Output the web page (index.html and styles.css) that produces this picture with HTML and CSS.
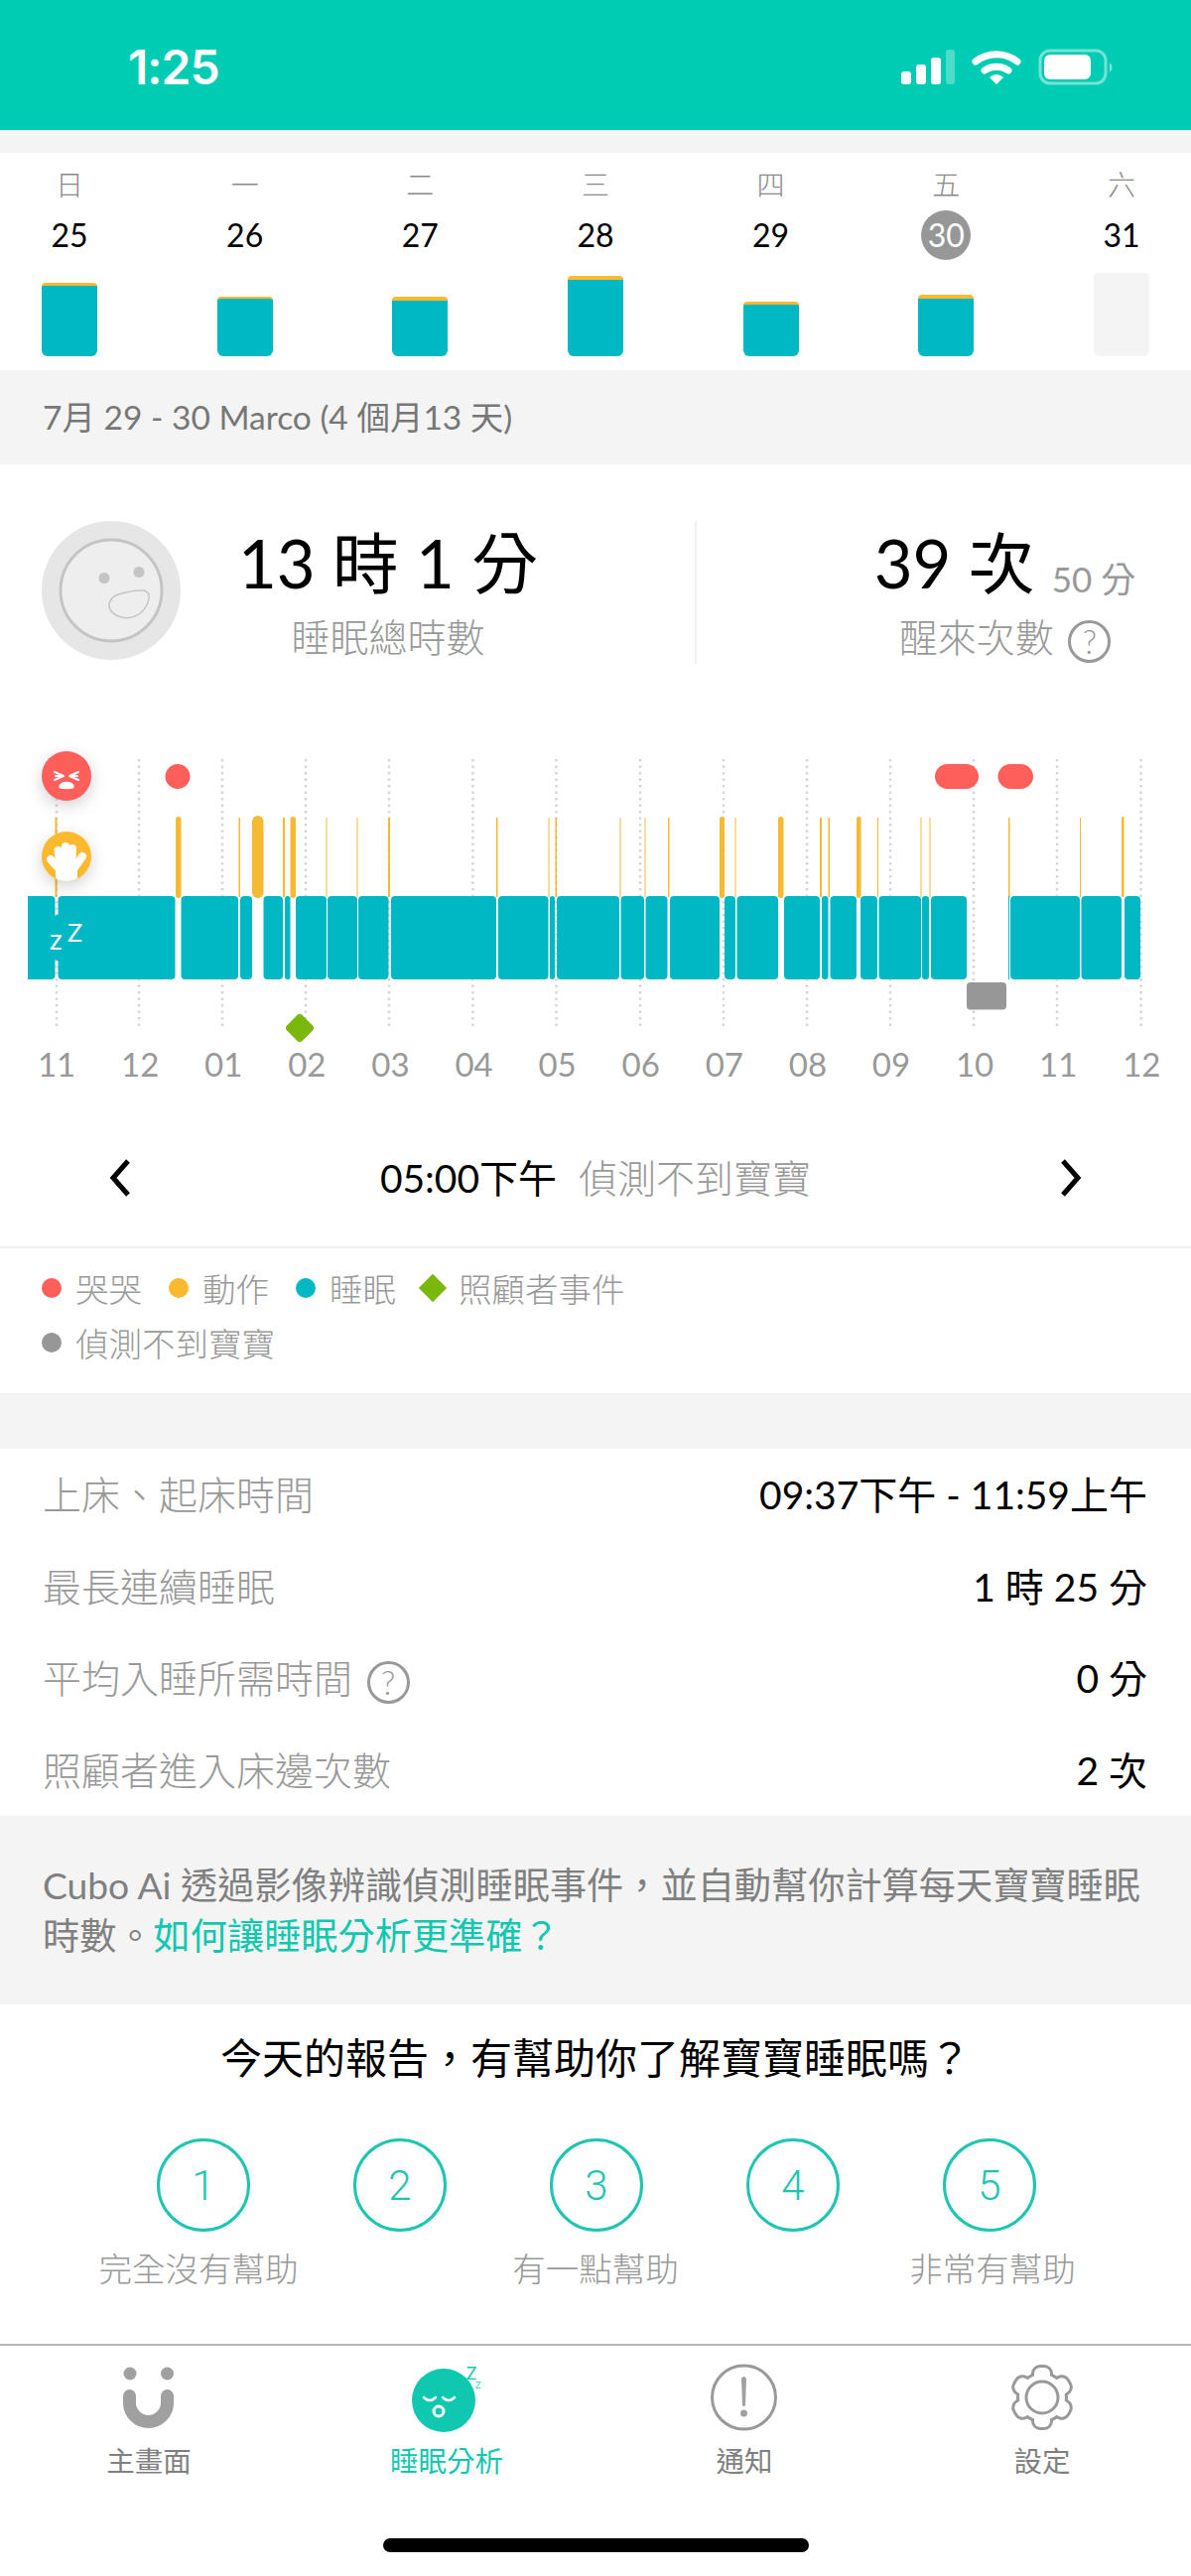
FILE: index.html
```html
<!DOCTYPE html>
<html lang="zh-Hant">
<head>
    <meta charset="UTF-8">
    <meta name="viewport" content="width=device-width, initial-scale=1.0">
    <title>睡眠分析</title>
    <link rel="stylesheet" href="styles.css">
</head>
<body>
    <div class="status-bar">
        <span class="clock">1:25</span>
        <svg class="status-icons" width="216" height="37" viewBox="0 0 216 37">
            <rect x="1" y="23" width="10" height="13" rx="3" fill="#fff"/>
            <rect x="16" y="16" width="10" height="20" rx="3" fill="#fff"/>
            <rect x="31" y="9" width="10" height="27" rx="3" fill="#fff"/>
            <rect x="46" y="1" width="9" height="35" rx="3" fill="#fff" opacity=".3"/>
            <path d="M76 13 A34 34 0 0 1 118 13" fill="none" stroke="#fff" stroke-width="7" stroke-linecap="round"/>
            <path d="M85 22 A21 21 0 0 1 109 22" fill="none" stroke="#fff" stroke-width="7" stroke-linecap="round"/>
            <path d="M90 29 Q97 23 104 29 L97 36 Z" fill="#fff"/>
            <rect x="141" y="2" width="66" height="33" rx="10" fill="none" stroke="#fff" stroke-width="3" opacity=".45"/>
            <rect x="145" y="6" width="47" height="25" rx="6" fill="#fff"/>
            <path d="M211 14 Q216 19 211 24 Z" fill="#fff" opacity=".5"/>
        </svg>
    </div>
    <div class="top-gap"></div>

    <div class="week">
        <div class="day">
            <span class="weekday">日</span>
            <span class="date">25</span>
            <div class="bar-slot"><div class="bar" style="height: 74px; border-top-width: 3px;"></div></div>
        </div>
        <div class="day">
            <span class="weekday">一</span>
            <span class="date">26</span>
            <div class="bar-slot"><div class="bar" style="height: 60px; border-top-width: 2px;"></div></div>
        </div>
        <div class="day">
            <span class="weekday">二</span>
            <span class="date">27</span>
            <div class="bar-slot"><div class="bar" style="height: 60px; border-top-width: 4px;"></div></div>
        </div>
        <div class="day">
            <span class="weekday">三</span>
            <span class="date">28</span>
            <div class="bar-slot"><div class="bar" style="height: 81px; border-top-width: 4px;"></div></div>
        </div>
        <div class="day">
            <span class="weekday">四</span>
            <span class="date">29</span>
            <div class="bar-slot"><div class="bar" style="height: 55px; border-top-width: 3px;"></div></div>
        </div>
        <div class="day">
            <span class="weekday">五</span>
            <span class="date active">30</span>
            <div class="bar-slot"><div class="bar" style="height: 62px; border-top-width: 4px;"></div></div>
        </div>
        <div class="day">
            <span class="weekday">六</span>
            <span class="date">31</span>
            <div class="bar-slot"><div class="bar empty"></div></div>
        </div>
    </div>

    <div class="range">7月 29 - 30 Marco (4 個月13 天)</div>

    <div class="summary">
        <svg class="avatar" width="140" height="140" viewBox="0 0 140 140">
            <circle cx="70" cy="70" r="70" fill="#e6e6e6"/>
            <circle cx="70" cy="70" r="51" fill="#eeeeee" stroke="#c4c4c4" stroke-width="3"/>
            <circle cx="63" cy="57.500" r="5.500" fill="#c4c4c4"/>
            <circle cx="98" cy="51.500" r="5.500" fill="#c4c4c4"/>
            <path d="M68 84 C69 78 72 76 76 74.500 C84 72 94 70 100 70 C106 69.500 109 73 108 78 C106 90 96 98 85 97.700 C76 97.500 67 91 68 84Z" fill="#eeeeee" stroke="#c4c4c4" stroke-width="1.500"/>
        </svg>
        <div class="sum-main">
            <div class="sum-value">13 時 1 分</div>
            <div class="sum-label">睡眠總時數</div>
        </div>
        <div class="sum-side">
            <div class="sum-value">39 次 <small>50 分</small></div>
            <div class="sum-label">醒來次數 <span class="help big">?</span></div>
        </div>
    </div>

    <div class="chart">
        <svg class="chart-canvas" width="1200" height="315" viewBox="0 740 1200 315">
            <defs>
                <clipPath id="hand-clip"><circle cx="25" cy="25" r="25"/></clipPath>
            </defs>
            <g class="guides">
                <line x1="57" x2="57" y1="765" y2="1037"/>
                <line x1="140" x2="140" y1="765" y2="1037"/>
                <line x1="224" x2="224" y1="765" y2="1037"/>
                <line x1="308" x2="308" y1="765" y2="1037"/>
                <line x1="392" x2="392" y1="765" y2="1037"/>
                <line x1="476.500" x2="476.500" y1="765" y2="1037"/>
                <line x1="560.500" x2="560.500" y1="765" y2="1037"/>
                <line x1="645" x2="645" y1="765" y2="1037"/>
                <line x1="729" x2="729" y1="765" y2="1037"/>
                <line x1="813" x2="813" y1="765" y2="1037"/>
                <line x1="897" x2="897" y1="765" y2="1037"/>
                <line x1="981" x2="981" y1="765" y2="1037"/>
                <line x1="1065" x2="1065" y1="765" y2="1037"/>
                <line x1="1149.500" x2="1149.500" y1="765" y2="1037"/>
            </g>

            <!-- crying -->
            <g class="cry">
                <rect x="166.500" y="770" width="25" height="25" rx="12.500"/>
                <rect x="942" y="770" width="44" height="25" rx="12.500"/>
                <rect x="1005.500" y="770" width="35.500" height="25" rx="12.500"/>
            </g>

            <!-- movement -->
            <g class="move">
                <rect x="55.500" y="824" width="2" height="80"/>
                <rect x="177" y="823" width="5.500" height="82" rx="2.700"/>
                <rect x="240.500" y="824" width="1.500" height="80"/>
                <rect x="254" y="822" width="11.500" height="83" rx="5.700"/>
                <rect x="285" y="824" width="2" height="80"/>
                <rect x="292.500" y="823" width="5.500" height="82" rx="2.700"/>
                <rect x="328.500" y="824" width="1" height="80"/>
                <rect x="359.500" y="824" width="1" height="80"/>
                <rect x="391" y="824" width="2" height="80"/>
                <rect x="500" y="824" width="1.500" height="80"/>
                <rect x="552.500" y="824" width="1" height="80"/>
                <rect x="559.500" y="824" width="1.500" height="80"/>
                <rect x="624.500" y="824" width="1" height="80"/>
                <rect x="649.500" y="824" width="1" height="80"/>
                <rect x="673" y="824" width="1.500" height="80"/>
                <rect x="725" y="823" width="5" height="82" rx="2.500"/>
                <rect x="740.500" y="824" width="1" height="80"/>
                <rect x="784" y="823" width="5.500" height="82" rx="2.700"/>
                <rect x="826" y="824" width="2" height="80"/>
                <rect x="834.500" y="824" width="1.500" height="80"/>
                <rect x="863" y="823" width="4.500" height="82" rx="2.200"/>
                <rect x="884" y="824" width="1" height="80"/>
                <rect x="927.500" y="824" width="1" height="80"/>
                <rect x="936.500" y="824" width="1" height="80"/>
                <rect x="1016" y="824" width="1.500" height="80"/>
                <rect x="1088" y="824" width="1" height="80"/>
                <rect x="1130" y="823" width="2.500" height="81" rx="1.200"/>
            </g>

            <!-- sleep -->
            <g class="sleep">
                <rect x="28" y="903" width="10" height="84"/>
                <rect x="28" y="903" width="27.500" height="84" rx="4"/>
                <rect x="58.500" y="903" width="118" height="84" rx="4"/>
                <rect x="182.500" y="903" width="57.500" height="84" rx="4"/>
                <rect x="242" y="903" width="12" height="84" rx="4"/>
                <rect x="265.500" y="903" width="19.500" height="84" rx="4"/>
                <rect x="287" y="903" width="5.500" height="84" rx="2.500"/>
                <rect x="298" y="903" width="31" height="84" rx="4"/>
                <rect x="330" y="903" width="30" height="84" rx="4"/>
                <rect x="361" y="903" width="30.500" height="84" rx="4"/>
                <rect x="394" y="903" width="106" height="84" rx="4"/>
                <rect x="502" y="903" width="50.500" height="84" rx="4"/>
                <rect x="554" y="903" width="5" height="84" rx="2.500"/>
                <rect x="561" y="903" width="63" height="84" rx="4"/>
                <rect x="625.500" y="903" width="23.500" height="84" rx="4"/>
                <rect x="650.500" y="903" width="22" height="84" rx="4"/>
                <rect x="675" y="903" width="50" height="84" rx="4"/>
                <rect x="730" y="903" width="11" height="84" rx="4"/>
                <rect x="742.500" y="903" width="41.500" height="84" rx="4"/>
                <rect x="790" y="903" width="36" height="84" rx="4"/>
                <rect x="828" y="903" width="6.500" height="84" rx="3"/>
                <rect x="836.500" y="903" width="26.500" height="84" rx="4"/>
                <rect x="867" y="903" width="17" height="84" rx="4"/>
                <rect x="885.500" y="903" width="42.500" height="84" rx="4"/>
                <rect x="929" y="903" width="7" height="84" rx="3"/>
                <rect x="938" y="903" width="36" height="84" rx="4"/>
                <rect x="1016" y="903" width="1" height="84"/>
                <rect x="1018" y="903" width="70" height="84" rx="4"/>
                <rect x="1089.500" y="903" width="40.500" height="84" rx="4"/>
                <rect x="1133" y="903" width="16" height="84" rx="4"/>
            </g>

            <rect class="lost" x="974" y="990" width="40" height="27.500" rx="4"/>
            <rect class="carer" x="291" y="1025" width="22" height="22" rx="4" transform="rotate(45 302 1036)"/>

            <!-- row markers -->
            <g class="marker">
                <circle cx="67" cy="782" r="25" fill="#ff5f5b"/>
                <path d="M55 778 L64 782 L55 786 M56 782 H64 M79 778 L70 782 L79 786 M78 782 H70" fill="none" stroke="#fff" stroke-width="2" stroke-linecap="round" stroke-linejoin="round"/>
                <path d="M60 793 C60 787 74 787 74 793 C74 795 60 795 60 793Z" fill="#fff" stroke="#fff" stroke-width="1.500"/>
            </g>
            <g class="marker">
                <circle cx="67" cy="863" r="25" fill="#fdb92e"/>
                <g transform="translate(42 838)" clip-path="url(#hand-clip)">
                    <rect x="14" y="30" width="22" height="22" rx="6" fill="#fff"/>
                    <g stroke="#fff" stroke-width="8" stroke-linecap="round">
                        <line x1="9" y1="28" x2="18" y2="38"/>
                        <line x1="16.500" y1="19" x2="19" y2="35"/>
                        <line x1="24" y1="15" x2="24" y2="35"/>
                        <line x1="31" y1="17" x2="30" y2="35"/>
                        <line x1="41" y1="25" x2="32" y2="38"/>
                    </g>
                </g>
            </g>
            <circle class="sleep-badge" cx="67" cy="945" r="25"/>
            <text class="zz" x="50" y="957">z</text>
            <text class="zz big" x="68" y="949">Z</text>
        </svg>
        <div class="hours">
            <span>11</span><span>12</span><span>01</span><span>02</span><span>03</span><span>04</span><span>05</span><span>06</span><span>07</span><span>08</span><span>09</span><span>10</span><span>11</span><span>12</span>
        </div>
    </div>

    <div class="time-nav">
        <svg width="26" height="40" viewBox="0 0 26 40"><path d="M21 3 L6 20 L21 37" class="chevron"/></svg>
        <div class="time-text"><span class="time-now">05:00下午</span><span class="time-state">偵測不到寶寶</span></div>
        <svg width="26" height="40" viewBox="0 0 26 40"><path d="M5 3 L20 20 L5 37" class="chevron"/></svg>
    </div>

    <div class="legend">
        <div class="legend-row">
            <span class="legend-item"><i class="dot red"></i>哭哭</span>
            <span class="legend-item"><i class="dot yellow"></i>動作</span>
            <span class="legend-item"><i class="dot teal"></i>睡眠</span>
            <span class="legend-item"><i class="diamond"></i>照顧者事件</span>
        </div>
        <div class="legend-row">
            <span class="legend-item"><i class="dot grey"></i>偵測不到寶寶</span>
        </div>
    </div>

    <div class="gap"></div>

    <div class="stats">
        <div class="stat-row"><span class="stat-label">上床、起床時間</span><span class="stat-value">09:37下午 - 11:59上午</span></div>
        <div class="stat-row"><span class="stat-label">最長連續睡眠</span><span class="stat-value">1 時 25 分</span></div>
        <div class="stat-row"><span class="stat-label">平均入睡所需時間 <span class="help">?</span></span><span class="stat-value">0 分</span></div>
        <div class="stat-row"><span class="stat-label">照顧者進入床邊次數</span><span class="stat-value">2 次</span></div>
    </div>

    <div class="note">Cubo Ai 透過影像辨識偵測睡眠事件，並自動幫你計算每天寶寶睡眠時數。<a class="note-link">如何讓睡眠分析更準確？</a></div>

    <div class="rating">
        <h2 class="rating-title">今天的報告，有幫助你了解寶寶睡眠嗎？</h2>
        <div class="scale">
            <span class="score">1</span>
            <span class="score">2</span>
            <span class="score">3</span>
            <span class="score">4</span>
            <span class="score">5</span>
        </div>
        <div class="scale-labels">
            <span>完全沒有幫助</span>
            <span>有一點幫助</span>
            <span>非常有幫助</span>
        </div>
    </div>

    <div class="tabs">
        <div class="tab">
            <svg width="100" height="74" viewBox="0 0 100 74">
                <circle cx="31" cy="12" r="6.500" fill="#a0a0a0"/>
                <circle cx="68.500" cy="12" r="6.500" fill="#a0a0a0"/>
                <path d="M30.500 34.500 V41.500 A19 19 0 0 0 68.500 41.500 V34.500" fill="none" stroke="#a0a0a0" stroke-width="13" stroke-linecap="round"/>
            </svg>
            <span>主畫面</span>
        </div>
        <div class="tab active">
            <svg width="100" height="74" viewBox="0 0 100 74">
                <circle cx="47" cy="39" r="32" fill="#10c8b0"/>
                <path d="M27 36 Q33 42 39 36 M46 36 Q52 42 58 36" fill="none" stroke="#fff" stroke-width="2.500" stroke-linecap="round"/>
                <circle cx="42" cy="50" r="5" fill="none" stroke="#fff" stroke-width="3"/>
                <text class="tab-z" x="70" y="18">Z</text>
                <text class="tab-z small" x="79" y="27">z</text>
            </svg>
            <span>睡眠分析</span>
        </div>
        <div class="tab">
            <svg width="100" height="74" viewBox="0 0 100 74">
                <circle cx="49.500" cy="36" r="32" fill="none" stroke="#999" stroke-width="3"/>
                <path d="M47 17 Q49.500 13 52 17 L51 44 Q49.500 46 48 44 Z" fill="#a0a0a0"/>
                <circle cx="49.500" cy="52" r="3.500" fill="#a0a0a0"/>
            </svg>
            <span>通知</span>
        </div>
        <div class="tab">
            <svg width="100" height="74" viewBox="0 0 100 74">
                <defs>
                    <g id="gear-shape">
                        <circle cx="50" cy="36" r="23"/>
                        <rect x="42" y="6" width="16" height="24" rx="6"/>
                        <rect x="42" y="6" width="16" height="24" rx="6" transform="rotate(60 50 36)"/>
                        <rect x="42" y="6" width="16" height="24" rx="6" transform="rotate(120 50 36)"/>
                        <rect x="42" y="6" width="16" height="24" rx="6" transform="rotate(180 50 36)"/>
                        <rect x="42" y="6" width="16" height="24" rx="6" transform="rotate(240 50 36)"/>
                        <rect x="42" y="6" width="16" height="24" rx="6" transform="rotate(300 50 36)"/>
                    </g>
                </defs>
                <use href="#gear-shape" fill="#999" stroke="#999" stroke-width="6"/>
                <use href="#gear-shape" fill="#fff"/>
                <circle cx="50" cy="36" r="16" fill="#fff" stroke="#999" stroke-width="3"/>
            </svg>
            <span>設定</span>
        </div>
    </div>
    <div class="home-bar"></div>
</body>
</html>
```

FILE: styles.css
```css
* {
    box-sizing: border-box;
}
body {
    margin: 0;
    width: 1200px;
    background-color: #ffffff;
    color: #000000;
    font-family: Lato, "Noto Sans CJK TC", sans-serif;
    overflow-x: hidden;
}

/* status bar */
.status-bar {
    height: 131px;
    background-color: #00ccb4;
    display: flex;
    justify-content: space-between;
    align-items: flex-start;
    padding: 40px 77px 0 129px;
}
.clock {
    color: #ffffff;
    font-family: Inter, sans-serif;
    font-weight: 600;
    font-size: 48px;
    line-height: 56px;
    letter-spacing: -1px;
}
.status-icons {
    margin-top: 9px;
}
.top-gap {
    height: 23px;
    background-color: #f4f4f4;
}

/* week strip */
.week {
    height: 219px;
    display: flex;
    justify-content: space-between;
    padding: 0 42px;
}
.day {
    width: 56px;
    display: flex;
    flex-direction: column;
    align-items: center;
}
.weekday {
    margin-top: 14px;
    height: 36px;
    line-height: 36px;
    font-size: 28px;
    font-weight: 300;
    color: #8a8a8a;
    white-space: nowrap;
}
.date {
    margin-top: 8px;
    width: 50px;
    height: 50px;
    line-height: 50px;
    border-radius: 50%;
    text-align: center;
    font-size: 32px;
    flex-shrink: 0;
}
.date.active {
    background-color: #979797;
    color: #ffffff;
}
.bar-slot {
    width: 56px;
    height: 97px;
    display: flex;
    align-items: flex-end;
}
.bar {
    width: 56px;
    background-color: #00b8c4;
    border-top: 3px solid #fdb92e;
    border-radius: 4px 4px 6px 6px;
}
.bar.empty {
    height: 84px;
    background-color: #f4f4f4;
    border-top: none;
}

.range {
    height: 95px;
    line-height: 95px;
    padding-left: 43px;
    background-color: #f4f4f4;
    color: #777777;
    font-size: 33.5px;
}

/* totals */
.summary {
    height: 272px;
    display: flex;
    align-items: flex-start;
    padding: 57px 0 0 42px;
}
.avatar {
    flex-shrink: 0;
}
.sum-main {
    width: 418px;
    text-align: center;
}
.sum-side {
    width: 500px;
    height: 144px;
    margin-left: 100px;
    padding-left: 123px;
    text-align: center;
    border-left: 2px solid #f0f0f0;
}
.sum-value {
    height: 84px;
    line-height: 84px;
    font-size: 67px;
    white-space: nowrap;
}
.sum-value small {
    font-size: 35px;
    color: #999999;
    vertical-align: -4px;
}
.sum-label {
    height: 56px;
    margin-top: 5px;
    line-height: 56px;
    font-size: 39px;
    font-weight: 300;
    color: #999999;
    white-space: nowrap;
}
.help {
    display: inline-flex;
    justify-content: center;
    align-items: center;
    width: 43px;
    height: 43px;
    margin-left: 4px;
    border: 3px solid #999999;
    border-radius: 50%;
    color: #999999;
    font-size: 33px;
    line-height: 1;
    vertical-align: -2px;
}

/* timeline */
.chart {
    height: 349px;
}
.chart-canvas {
    display: block;
    overflow: visible;
}
.guides line {
    stroke: #d6d6d6;
    stroke-width: 2.5;
    stroke-dasharray: 2.5 4;
}
.cry {
    fill: #ff5f5b;
}
.move {
    fill: #f5b932;
}
.sleep {
    fill: #00b8c4;
}
.lost {
    fill: #979797;
}
.carer {
    fill: #7ab80e;
}
.marker {
    filter: drop-shadow(0 5px 8px rgba(0, 0, 0, 0.18));
}
.sleep-badge {
    fill: #00b8c4;
}
.zz {
    fill: #ffffff;
    font-size: 28px;
}
.zz.big {
    font-size: 25px;
}
.hours {
    display: grid;
    grid-template-columns: repeat(14, 84.1px);
    padding-left: 15px;
    height: 34px;
    line-height: 34px;
    text-align: center;
    font-size: 33px;
    color: #999999;
}

/* current segment */
.time-nav {
    height: 169px;
    display: flex;
    justify-content: space-between;
    align-items: flex-start;
    padding: 78px 108px 0;
    border-bottom: 2px solid #f0f0f0;
}
.time-text {
    display: flex;
    gap: 22px;
    line-height: 56px;
    font-size: 39px;
    margin-top: -8px;
}
.time-state {
    color: #999999;
    font-weight: 300;
}
.chevron {
    fill: none;
    stroke: #000000;
    stroke-width: 5;
    stroke-linejoin: miter;
}

/* legend */
.legend {
    height: 146px;
    padding: 12px 0 0 42px;
}
.legend-row {
    height: 55px;
    display: flex;
    gap: 27px;
    align-items: center;
}
.legend-item {
    display: flex;
    align-items: center;
    gap: 14px;
    font-size: 33.5px;
    font-weight: 300;
    color: #999999;
}
.dot {
    width: 20px;
    height: 20px;
    border-radius: 50%;
}
.dot.red {
    background-color: #ff5f5b;
}
.dot.yellow {
    background-color: #fdb92e;
}
.dot.teal {
    background-color: #00b8c4;
}
.dot.grey {
    background-color: #979797;
}
.diamond {
    width: 20px;
    height: 20px;
    background-color: #7ab80e;
    transform: rotate(45deg);
    margin-right: 2px;
}
.gap {
    height: 56px;
    background-color: #f4f4f4;
}

/* figures */
.stats {
    height: 370px;
    padding: 0 44px 0 43px;
}
.stat-row {
    height: 92.5px;
    padding-bottom: 4px;
    display: flex;
    justify-content: space-between;
    align-items: center;
}
.stat-label {
    font-size: 39px;
    font-weight: 300;
    color: #999999;
}
.stat-value {
    font-size: 39px;
}
.note {
    height: 190px;
    padding: 44px 40px 0 43px;
    background-color: #f4f4f4;
    color: #808080;
    font-size: 37.2px;
    line-height: 51px;
}
.note-link {
    color: #10c8b0;
}

/* rating */
.rating {
    height: 342px;
    padding-top: 24px;
}
.rating-title {
    margin: 0;
    text-align: center;
    font-size: 42px;
    font-weight: 400;
    line-height: 60px;
}
.scale {
    margin-top: 51px;
    padding-left: 2px;
    display: flex;
    justify-content: center;
    gap: 104px;
}
.score {
    width: 94px;
    height: 94px;
    display: flex;
    justify-content: center;
    align-items: center;
    border: 3px solid #1ec5b0;
    border-radius: 50%;
    color: #1ec5b0;
    font-family: Roboto, sans-serif;
    font-weight: 300;
    font-size: 42px;
}
.scale-labels {
    margin-top: 17px;
    display: grid;
    grid-template-columns: repeat(3, 1fr);
    text-align: center;
    line-height: 40px;
    font-size: 33.5px;
    font-weight: 300;
    color: #999999;
}

/* tab bar */
.tabs {
    height: 138px;
    padding-top: 16px;
    display: grid;
    grid-template-columns: repeat(4, 300px);
    border-top: 2px solid #b5b5b5;
}
.tab {
    display: flex;
    flex-direction: column;
    align-items: center;
    font-size: 28.5px;
    line-height: 40px;
    color: #808080;
}
.tab svg {
    margin-bottom: 6px;
}
.tab.active {
    color: #10c8b0;
}
.tab-z {
    fill: #10c8b0;
    font-size: 17px;
}
.tab-z.small {
    font-size: 13px;
    opacity: 0.7;
}
.home-bar {
    width: 429px;
    height: 14px;
    margin: 58px auto 22px;
    background-color: #000000;
    border-radius: 7px;
}
```
